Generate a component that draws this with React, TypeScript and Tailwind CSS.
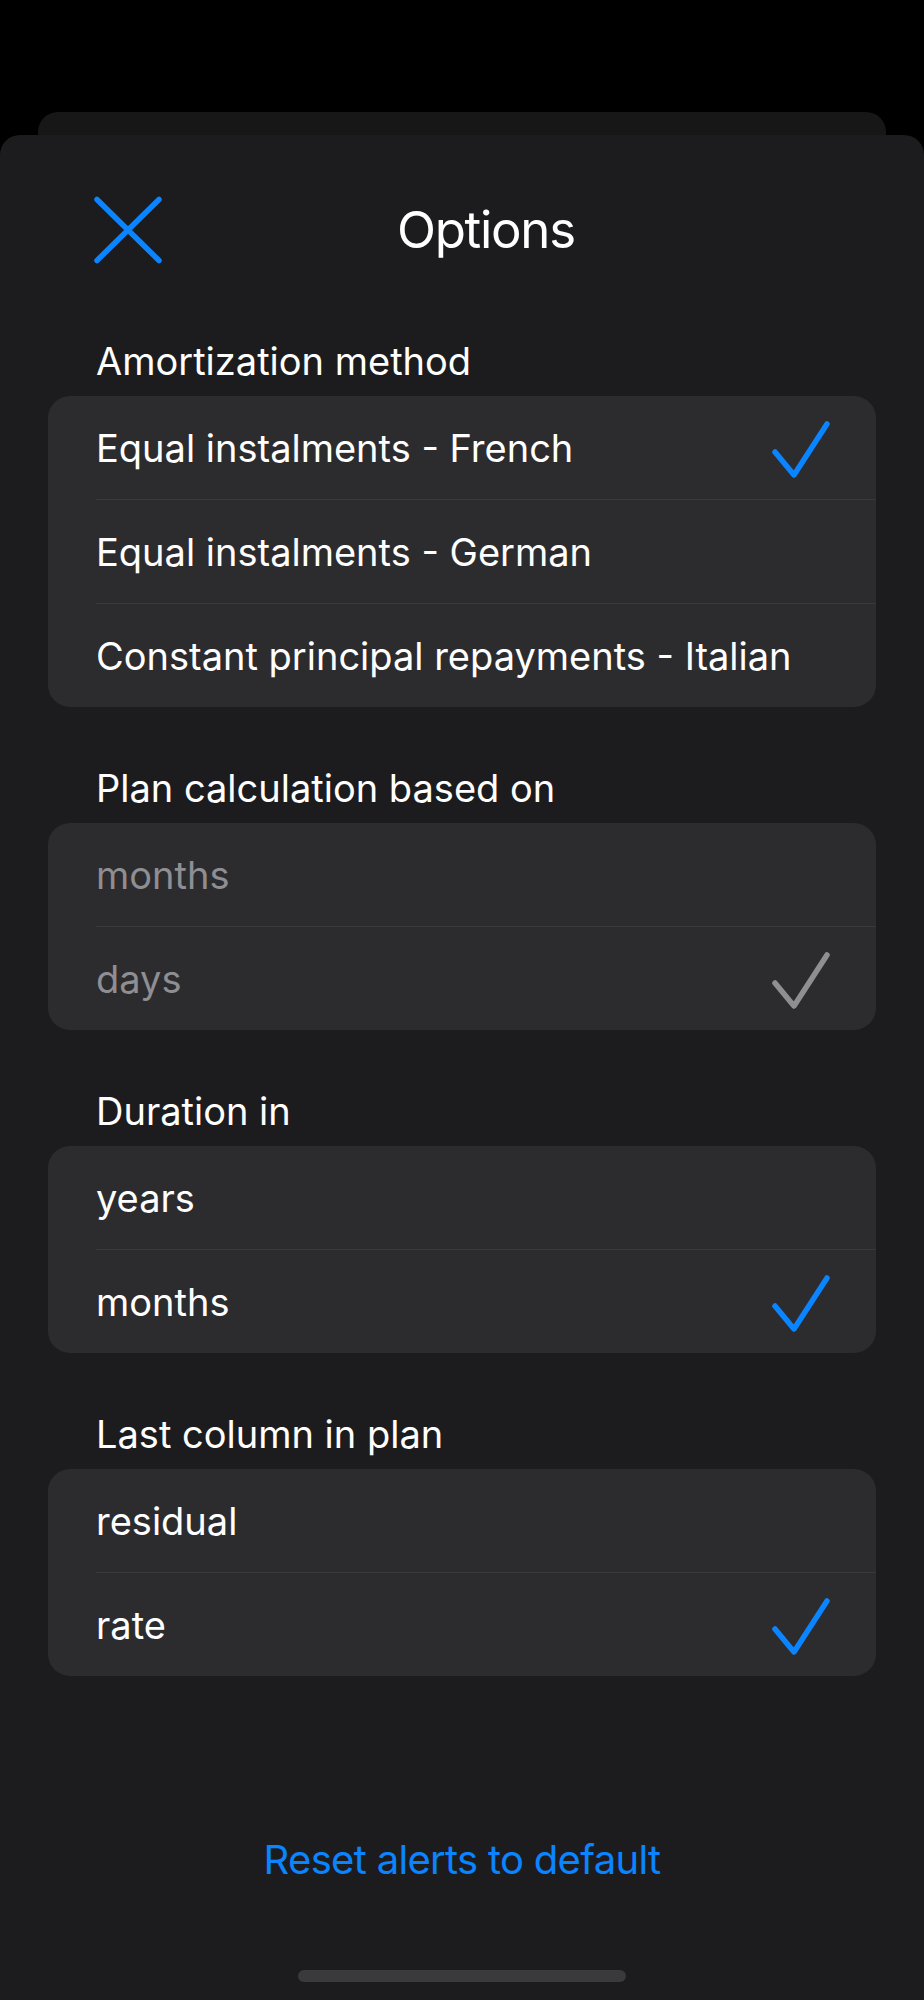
import React from "react";

const FONT = "font-['Inter','Noto_Sans',sans-serif]";

type Row = { label: string; checked?: boolean };

type Section = {
  title: string;
  rows: Row[];
  muted?: boolean;
};

const SECTIONS: Section[] = [
  {
    title: "Amortization method",
    rows: [
      { label: "Equal instalments - French", checked: true },
      { label: "Equal instalments - German" },
      { label: "Constant principal repayments - Italian" },
    ],
  },
  {
    title: "Plan calculation based on",
    muted: true,
    rows: [{ label: "months" }, { label: "days", checked: true }],
  },
  {
    title: "Duration in",
    rows: [{ label: "years" }, { label: "months", checked: true }],
  },
  {
    title: "Last column in plan",
    rows: [{ label: "residual" }, { label: "rate", checked: true }],
  },
];

function CloseIcon() {
  return (
    <svg width="70" height="70" viewBox="0 0 70 70" fill="none">
      <path
        d="M4 4.5L66 65.5M66 4.5L4 65.5"
        stroke="#0a84ff"
        strokeWidth="5.5"
        strokeLinecap="round"
      />
    </svg>
  );
}

function Check({ muted }: { muted?: boolean }) {
  return (
    <svg width="60" height="60" viewBox="0 0 60 60" fill="none">
      <path
        d="M4 34L23 57L56 6"
        stroke={muted ? "#8e8e93" : "#0a84ff"}
        strokeWidth="5.5"
        strokeLinecap="round"
        strokeLinejoin="round"
      />
    </svg>
  );
}

function OptionCard({ section }: { section: Section }) {
  return (
    <div className="flex flex-col">
      <div className="pl-[96px] text-[38px] leading-[46px] text-white">
        {section.title}
      </div>
      <div className="mx-[48px] mt-[12px] rounded-[22px] bg-[#2c2c2e] pl-[48px]">
        {section.rows.map((r, i) => (
          <div
            key={r.label}
            className={
              i < section.rows.length - 1
                ? "flex h-[104px] items-center justify-between border-b border-[#3a3a3c] pr-[45px]"
                : "flex h-[103px] items-center justify-between pr-[45px]"
            }
          >
            <span
              className={
                section.muted
                  ? "text-[38px] leading-[46px] text-[#8e8e93]"
                  : "text-[38px] leading-[46px] text-white"
              }
            >
              {r.label}
            </span>
            {r.checked && <Check muted={section.muted} />}
          </div>
        ))}
      </div>
    </div>
  );
}

export default function App() {
  return (
    <div className={`flex h-[2000px] w-[924px] flex-col overflow-hidden bg-black ${FONT}`}>
      <div className="mx-[38px] mt-[112px] h-[23px] shrink-0 rounded-t-[20px] bg-[#171718]" />
      <div className="flex flex-1 flex-col rounded-t-[20px] bg-[#1c1c1e]">
        <div className="flex h-[190px] items-center pl-[93px]">
          <CloseIcon />
          <span className="ml-[234px] text-[51px] leading-[62px] tracking-[-1.3px] text-white">
            Options
          </span>
        </div>

        <div className="mt-[13px] flex flex-col gap-[58px]">
          {SECTIONS.map((s) => (
            <OptionCard key={s.title} section={s} />
          ))}
        </div>

        <div className="mt-[160px] text-center text-[40px] leading-[48px] tracking-[-0.7px] text-[#0a84ff]">
          Reset alerts to default
        </div>

        <div className="mx-auto mt-[86px] h-[12px] w-[328px] rounded-full bg-[#3a3a3c]" />
      </div>
    </div>
  );
}
